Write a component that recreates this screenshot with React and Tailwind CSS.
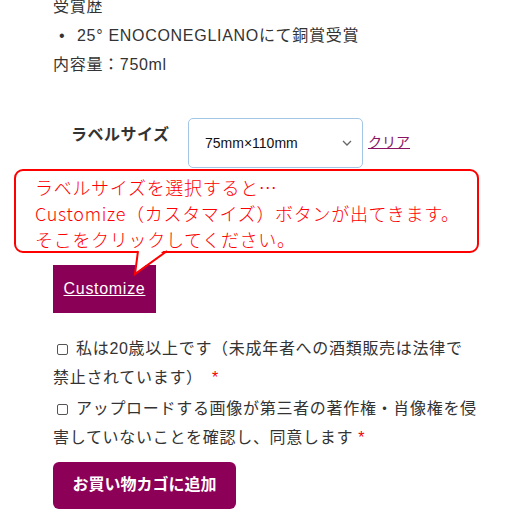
import React from "react";

const font = { fontFamily: '"Liberation Sans", "Noto Sans CJK JP", sans-serif' };

function Box() {
  return (
    <span className="inline-block w-[11px] h-[11px] border border-[#555] rounded-[2px] align-[-1px] mr-[8px] ml-[4px]" />
  );
}

export default function App() {
  return (
    <div
      className="relative w-[524px] h-[524px] overflow-hidden bg-white text-[#333] text-[16px] leading-[28.8px] tracking-[0.7px]"
      style={font}
    >
      <div className="pl-[53px] -mt-[7px]">
        <div>受賞歴</div>
        <div className="flex">
          <span className="w-[24px] pl-[6px]">•</span>
          <span>25° ENOCONEGLIANOにて銅賞受賞</span>
        </div>
        <div>内容量：750ml</div>

        <div className="flex items-start mt-[39px] pl-[18px]">
          <div className="font-bold w-[117px] pt-[3px] tracking-[0.5px]">ラベルサイズ</div>
          <div className="flex items-center justify-between w-[175px] h-[50px] border border-[#a3c6e6] rounded-[5px] pl-[16px] pr-[10px] text-[14px] tracking-normal text-[#111]">
            <span>75mm×110mm</span>
            <svg width="10" height="6" viewBox="0 0 10 6" fill="none">
              <path d="M1 1 L5 5 L9 1" stroke="#666" strokeWidth="1.3" />
            </svg>
          </div>
          <a className="ml-[5px] mt-[10px] text-[14px] text-[#8b1163] underline leading-[28px] tracking-normal">クリア</a>
        </div>

        <div className="mt-[97px] w-[103px] h-[48px] bg-[#8b0057] flex items-center justify-center">
          <span className="text-white underline text-[16px]">Customize</span>
        </div>

        <div className="mt-[22px] whitespace-nowrap">
          <div>
            <Box />私は20歳以上です（未成年者への酒類販売は法律で
            <br />
            禁止されています） <span className="text-[#e00] ml-[4px]">*</span>
          </div>
          <div className="mt-[2px]">
            <Box />アップロードする画像が第三者の著作権・肖像権を侵
            <br />
            害していないことを確認し、同意します <span className="text-[#e00]">*</span>
          </div>
        </div>

        <div className="mt-[9px] w-[183px] h-[47px] rounded-[6px] bg-[#8c0058] flex items-center justify-center text-white font-bold tracking-normal">
          お買い物カゴに追加
        </div>
      </div>

      {/* callout overlay */}
      <div
        className="absolute left-[14px] top-[169px] w-[465px] h-[84px] border-2 border-[#ff0000] rounded-[9px] bg-white text-[#ff0000] text-[18px] leading-[26px] font-light pl-[19px] pt-[3px] tracking-[0.7px]"
        style={{ fontFamily: '"Noto Sans CJK JP", "Liberation Sans", sans-serif' }}
      >
        <div>ラベルサイズを選択すると…</div>
        <div>Customize（カスタマイズ）ボタンが出てきます。</div>
        <div>そこをクリックしてください。</div>
      </div>
      <svg className="absolute left-[130px] top-[248px]" width="44" height="30" viewBox="0 0 44 30">
        <polygon points="8,0 5,26 37,0" fill="white" />
        <polyline points="8,3 5,26 37,3" fill="none" stroke="#ff0000" strokeWidth="2" strokeLinejoin="miter" />
      </svg>
    </div>
  );
}
